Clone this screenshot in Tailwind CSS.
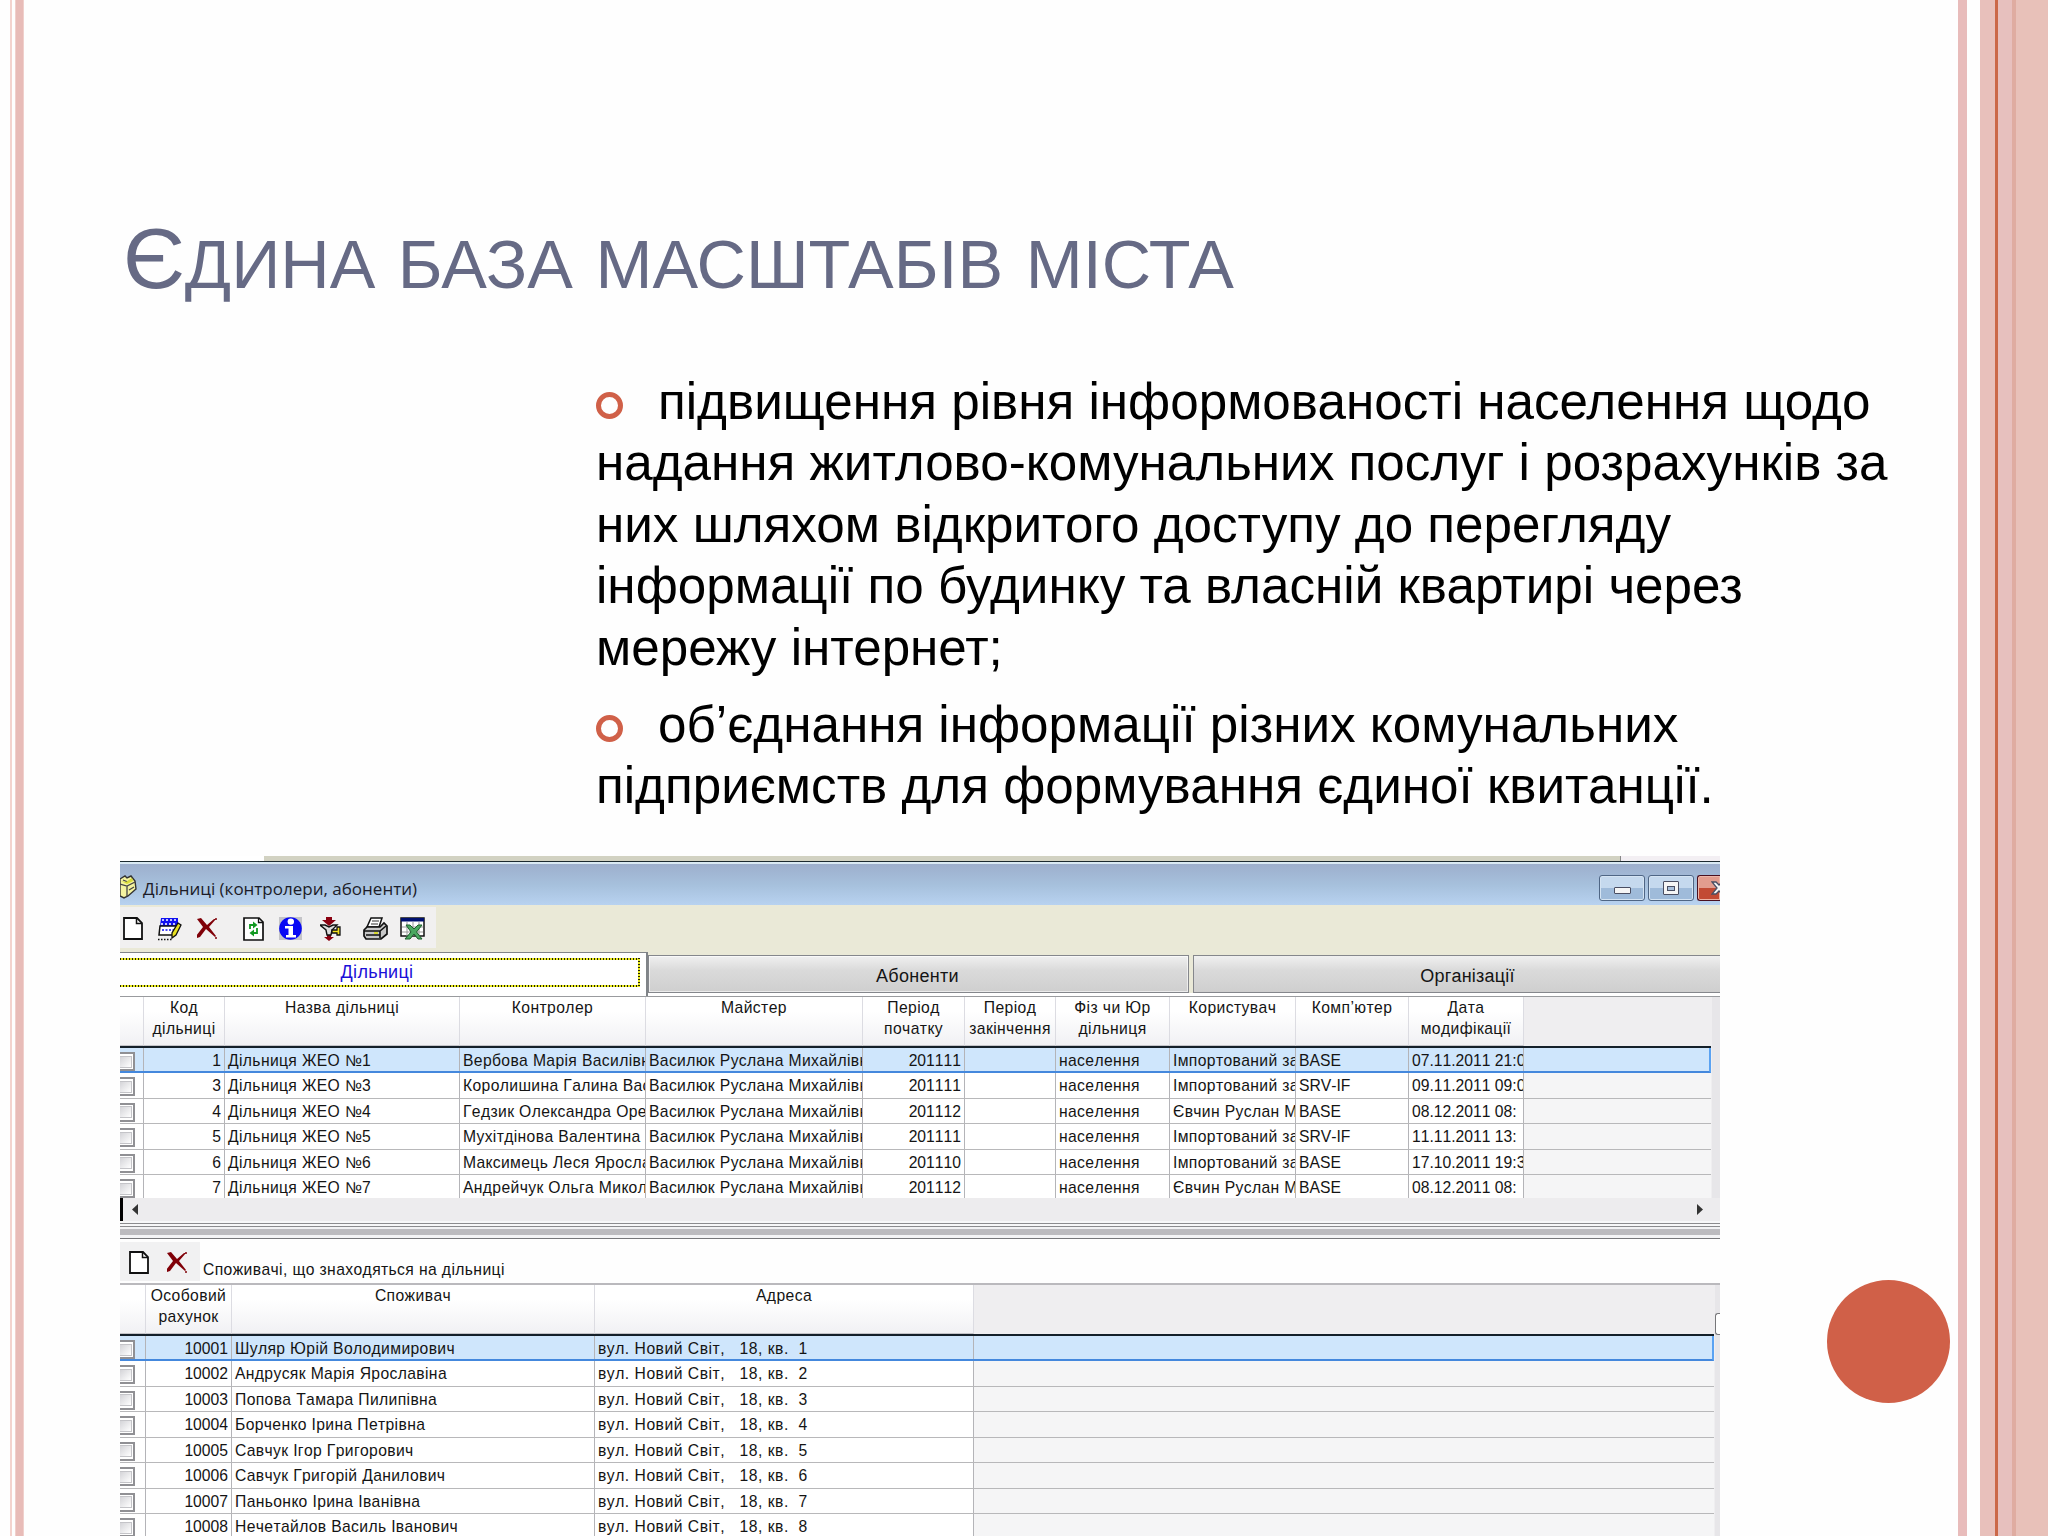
<!DOCTYPE html>
<html lang="uk">
<head>
<meta charset="utf-8">
<title>Єдина база масштабів міста</title>
<script src="https://cdn.jsdelivr.net/npm/@tailwindcss/browser@4"></script>
</head>
<body class="bg-[#fefefe]">
<svg class="hidden">
  <symbol id="doc" viewBox="0 0 20 23"><path d="M1 1h13l5 5v16H1z" fill="#fff" stroke="#111" stroke-width="1.8"/><path d="M13.500 1v5.500H19" fill="none" stroke="#111" stroke-width="1.500"/></symbol>
  <symbol id="del" viewBox="0 0 20 21"><path d="M0 1l4-1 6 7 7-6 2 0-7 8 7 9-1 1-9-8-6 8-3 1-1-2 7-9z" fill="#800008"/><path d="M18 1h2M18 20h2" stroke="#800008" stroke-width="1.500"/></symbol>
</svg>
<div class="relative flex h-[1536px] w-[2048px] overflow-hidden">
  <div class="flex w-[120px] shrink-0">
    <div class="ml-[10px] h-full w-[2px] bg-[#f3d3ce]"></div>
    <div class="ml-[3px] h-full w-[9px] border-x border-[#f0d0cc] bg-[#e8bcb8]"></div>
  </div>

  <main class="flex w-[1838px] shrink-0 flex-col font-['Liberation_Sans',sans-serif]">
    <h1 class="mt-[207px] h-[107px] pl-[3px] text-[86px] leading-[102px] whitespace-nowrap text-[#666a85] [word-spacing:3.5px]">Є<span class="text-[68.4px]">ДИНА БАЗА МАСШТАБІВ МІСТА</span></h1>

    <div class="mt-[57px] ml-[476px] flex h-[485px] flex-col text-[51.2px] leading-[61.4px] whitespace-nowrap text-black">
      <div class="flex items-center"><i class="mt-[7px] mr-[35px] block size-[27px] rounded-full border-[5.500px] border-[#d06048]"></i>підвищення рівня інформованості населення щодо</div>
      <div>надання житлово-комунальних послуг і розрахунків за</div>
      <div>них шляхом відкритого доступу до перегляду</div>
      <div>інформації по будинку та власній квартирі через</div>
      <div>мережу інтернет;</div>
      <div class="mt-[16px] flex items-center"><i class="mt-[7px] mr-[35px] block size-[27px] rounded-full border-[5.500px] border-[#d06048]"></i>об’єднання інформації різних комунальних</div>
      <div>підприємств для формування єдиної квитанції.</div>
    </div>

    <section class="flex h-[680px] w-[1600px] flex-col overflow-hidden bg-white text-[15.700px] text-[#141414] [font-kerning:none]">
      <div class="flex h-[5px] shrink-0"><div class="w-[144px]"></div><div class="w-[1357px] border-r border-[#888] bg-[#d2d2c2]"></div><div class="flex-1 bg-[#f3eff3]"></div></div>
      <div class="h-px shrink-0 bg-[#1c2a30]"></div>
      <div class="h-[2px] shrink-0 bg-[#d9e9f3]"></div>

      <header class="flex h-[41px] shrink-0 bg-linear-to-b from-[#9dafcd] via-[#a6c0dc] to-[#b8d2f0]">
        <svg class="mt-[11px] h-[24px] w-[17px]" viewBox="0 0 17 24"><path d="M0 4l5-3 2 2 4-2 4 5 1 8-8 7-4 2-4-2z" fill="#f4f3a0" stroke="#333" stroke-width="1.400"/><path d="M0 9l7 2 8-4M7 11v11M3 5l5 2 4-3M9 15l5-3" fill="none" stroke="#444" stroke-width="1.300"/><path d="M1 6l6 3 6-3-1-3-6 4z" fill="#d8dc38"/></svg>
        <div class="ml-[6px] pt-[13px] font-['Open_Sans',sans-serif] text-[17px] leading-[24px] whitespace-pre text-[#1c1c28]">Дільниці (контролери, абоненти)</div>
        <div class="ml-auto flex gap-[3px] pt-[11px]">
          <div class="flex h-[26px] w-[46px] items-center justify-center rounded-[3px] border-[1.500px] border-[#4f6685] bg-linear-to-b from-[#c5d9ee] from-50% to-[#9fbbda] to-50% inset-ring inset-ring-[#d5e4f3]"><i class="mt-[5px] h-[7px] w-[17px] rounded-[1px] border-[1.500px] border-[#4a4e62] bg-[#f5f5f5]"></i></div>
          <div class="flex h-[26px] w-[46px] items-center justify-center rounded-[3px] border-[1.500px] border-[#4f6685] bg-linear-to-b from-[#c5d9ee] from-50% to-[#9fbbda] to-50% inset-ring inset-ring-[#d5e4f3]"><i class="flex h-[14px] w-[16px] items-center justify-center rounded-[1px] border-[1.500px] border-[#4a4e62] bg-[#f5f5f5]"><b class="h-[5px] w-[8px] border-[1.500px] border-[#4a4e62] bg-[#a8c0dc]"></b></i></div>
          <div class="h-[26px] w-[23px] overflow-hidden rounded-l-[3px] border-[1.500px] border-r-0 border-[#4a1020] bg-linear-to-b from-[#e29c8e] from-50% to-[#c24a34] to-50% inset-ring inset-ring-[#edb5a8]"><svg class="mt-[5px] ml-[13px] h-[14px] w-[16px]" viewBox="0 0 16 14"><path d="M1 1h4l3 3 3-3h4l-5 6 5 6h-4l-3-3-3 3H1l5-6z" fill="#f5f5f5" stroke="#4a4e62" stroke-width="1.300"/></svg></div>
        </div>
      </header>

      <div class="flex h-[47px] shrink-0 items-start bg-[#eae9d7] pt-[2px]">
        <div class="flex h-[41px] w-[316px] items-start bg-[#f1f0f0] pt-[10px] pl-[3px]">
          <svg class="h-[23px] w-[20px]"><use href="#doc"/></svg>
          <svg class="ml-[15px] h-[24px] w-[24px]" viewBox="0 0 24 24"><path d="M3 1h17v8H2z" fill="#1010f0"/><path d="M4 3h2m2 0h2m2 0h2m2 0h2M3 7h2m2 0h2m2 0h2m2 0h2" stroke="#fff" stroke-width="1.300"/><path d="M2 9h17l-2 9H1z" fill="#fff" stroke="#111" stroke-width="1.500"/><path d="M4 13h12" stroke="#1010f0" stroke-width="1.500" stroke-dasharray="2 1.500"/><path d="M20 6l3 2-5 10-4 3 0-5z" fill="#e8e020" stroke="#111" stroke-width="1.300"/><path d="M0 22.500h14" stroke="#111" stroke-width="1.500" stroke-dasharray="1.500 1.500"/></svg>
          <svg class="mt-[1px] ml-[15px] h-[21px] w-[20px]"><use href="#del"/></svg>
          <svg class="ml-[26px] h-[24px] w-[21px]" viewBox="0 0 21 24"><path d="M1 1h15l4 4v18H1z" fill="#fff" stroke="#111" stroke-width="1.700"/><path d="M15.500 1v4.500H20" fill="none" stroke="#111" stroke-width="1.300"/><path d="M7 12V8h4M14 11v5H10" fill="none" stroke="#129a22" stroke-width="1.800"/><path d="M10 4.500l4.500 3.500-4.500 3.500zM11 12.500l-4.500 3.500 4.500 3.500z" fill="#129a22"/></svg>
          <svg class="ml-[15px] h-[23px] w-[23px]" viewBox="0 0 23 23"><path d="M0 0h23v23H0z" fill="#c4c4c8"/><circle cx="11.500" cy="11.500" r="11.300" fill="#0808f4"/><circle cx="11.800" cy="4.600" r="3.200" fill="#fff"/><path d="M6 9h8v9h3v2.500H7V18h2.500v-6.500H6z" fill="#fff"/></svg>
          <svg class="ml-[18px] h-[24px] w-[21px]" viewBox="0 0 21 24"><path d="M6 0h6v3h4l-7 6-7-6h4zM7 17h4v3h3l-5 4-5-4h3z" fill="#8a0010"/><path d="M0 8h5l4 2 4-2h4l-5 5-1 5H7l-1-5z" fill="#ddd" stroke="#111" stroke-width="1.400"/><path d="M12 13h5v-3h3v8h-3v-2h-5z" fill="#f0e020" stroke="#111" stroke-width="1.300"/></svg>
          <svg class="ml-[22px] h-[23px] w-[25px]" viewBox="0 0 25 23"><path d="M8 1h11l-3 9H4z" fill="#fff" stroke="#111" stroke-width="1.500"/><path d="M9 4h7M8 7h7" stroke="#333" stroke-width="1.200"/><path d="M4 10h13l4-4 3 3v8l-6 5H3l-2-3v-6z" fill="#c8c8c8" stroke="#111" stroke-width="1.700"/><path d="M1 14h16l6-5M3 18h14M17 14v7" fill="none" stroke="#111" stroke-width="1.600"/><path d="M11 16h4" stroke="#d8d820" stroke-width="1.800"/></svg>
          <svg class="ml-[12px] h-[23px] w-[25px]" viewBox="0 0 25 23"><path d="M1 1h23v18H1z" fill="#fff" stroke="#111" stroke-width="1.500"/><path d="M1 1h23v3.500H1z" fill="#001070"/><path d="M7 5v14M13 5v14M19 5v14M2 10h21M2 15h21" stroke="#999" stroke-width="1"/><path d="M6 8h4l4 4 4-4h4l-5.500 7 5.500 7h-4l-4-5-4 5H5l6-7z" fill="#4aa860" stroke="#1c5f2c"/></svg>
        </div>
      </div>

      <div class="flex h-[45px] shrink-0 items-end border-b border-[#999b9e] bg-[#eae9d7]">
        <div class="h-full w-[528px] border-t-[1.500px] border-r-2 border-[#808488] bg-white pt-[5px] pr-[6px]">
          <div class="flex h-[29px] bg-[repeating-linear-gradient(90deg,#222200_0_1px,#e8e820_1px_3px)]">
            <div class="my-[2px] flex flex-1 items-center justify-center bg-white pr-[4px] text-[18px] tracking-[0.3px] text-[#1a10d8]">Дільниці</div>
            <div class="w-[2px] bg-[repeating-linear-gradient(180deg,#222200_0_1px,#e8e820_1px_3px)]"></div>
          </div>
        </div>
        <div class="flex h-[41px] flex-1 gap-[4px] border-b-[3px] border-white">
          <div class="flex w-[541px] justify-center border-[1.500px] border-[#85878c] bg-linear-to-b from-[#f0f0f0] from-0% via-[#dadada] via-40% to-[#cfcfcf] pt-[6px] pr-[2px] text-[18px] leading-[28px] tracking-[0.3px] inset-ring inset-ring-white/60">Абоненти</div>
          <div class="flex flex-1 justify-center border-[1.500px] border-r-0 border-[#85878c] bg-linear-to-b from-[#f0f0f0] from-0% via-[#dadada] via-40% to-[#cfcfcf] pt-[6px] pl-[21px] text-[18px] leading-[28px] tracking-[0.2px]">Організації</div>
        </div>
      </div>

      <div class="flex h-[201px] shrink-0 overflow-hidden bg-[#efeef0]">
        <div id="areas" class="w-[1591px] overflow-hidden"></div>
        <div class="ml-[1px] flex-1 bg-[#e7e6e9]"></div>
      </div>
      <div class="flex h-[23px] shrink-0 items-center justify-between border-l-3 border-black bg-[#edecee] pr-[17px] pl-[9px]">
        <svg class="h-[11px] w-[6px]" viewBox="0 0 6 11"><path d="M6 0v11L0 5.500z" fill="#333"/></svg>
        <svg class="h-[11px] w-[6px]" viewBox="0 0 6 11"><path d="M0 0v11l6-5.500z" fill="#333"/></svg>
      </div>
      <div class="h-[19px] shrink-0 bg-[linear-gradient(#f7f7f8_0_2px,#8b8b8e_2px_3px,#f7f7f8_3px_5px,#8b8b8e_5px_6px,#f2f2f4_6px_8px,#bcbbbf_8px_14px,#f4f4f6_14px_17px,#77777a_17px_18px,#fff_18px)]"></div>

      <div class="flex h-[45px] shrink-0 items-start border-b-2 border-[#bab9bd] bg-[#fefefe]">
        <div class="mt-[2px] flex h-[39px] w-[80px] items-start bg-[#f1f1f2] pt-[9px] pl-[9px]">
          <svg class="h-[23px] w-[20px]"><use href="#doc"/></svg>
          <svg class="mt-[1px] ml-[18px] h-[21px] w-[20px]"><use href="#del"/></svg>
        </div>
        <div class="pt-[18px] pl-[3px] leading-[24px] tracking-[0.38px] whitespace-pre">Споживачі, що знаходяться на дільниці</div>
      </div>
      <div class="flex h-[252px] shrink-0 overflow-hidden bg-[#efeef0]">
        <div id="people" class="w-[1594px] overflow-hidden"></div>
        <div class="ml-[1px] flex-1 bg-[#e7e6e9] pt-[28px]"><div class="h-[22px] rounded-l-[3px] border-[1.500px] border-r-0 border-[#77777a] bg-white"></div></div>
      </div>
    </section>
  </main>

  <div class="flex flex-1">
    <div class="h-full w-[9px] bg-[#e8bcbb]"></div>
    <div class="h-full w-[13px]"></div>
    <div class="h-full w-[15px] bg-[#e8c0bb]"></div>
    <div class="h-full w-[3px] bg-[#cb6848]"></div>
    <div class="h-full w-[14px] bg-[#e7c0be]"></div>
    <div class="h-full w-[4px] bg-[#dfaca1]"></div>
    <div class="h-full flex-1 bg-[#e8c1b9]"></div>
  </div>
  <div class="absolute top-[1280px] left-[1827px] size-[123px] rounded-full bg-[#d06048]"></div>
</div>

<script>
  function build(id, grid, heads, rows, right) {
    const host = document.getElementById(id);
    let h = '<div class="' + grid + ' h-[51px] border-b-2 border-[#14202a] bg-[#efeef0] text-center leading-[21.300px] tracking-[0.4px]">';
    heads.forEach(t => { h += '<div class="overflow-hidden border-r border-b border-r-[#dcdce2] border-b-[#c4c4c8] bg-linear-to-b from-white from-30% to-[#f1f1f4] whitespace-pre">' + t + '</div>'; });
    h += '<div></div></div>';
    rows.forEach((r, n) => {
      const sel = n === 0;
      h += '<div class="' + grid + (sel ? ' border-r-2 border-b-2 border-b-[#4488dd] border-r-[#5aa2f2] bg-[#cfe6fc]' : ' border-b-[1.500px] border-b-[#b8b8ba]') + ' h-[25.450px] leading-[25px]">';
      h += '<div class="border-r border-[#b4b4b8] pt-[4px] ' + (sel ? '' : 'bg-white') + '"><div class="h-[19px] w-[15px] border-2 border-l-0 border-[#909094] bg-white py-[1.500px] pr-[1.500px]"><div class="h-full border border-l-0 border-[#c4c4c8] bg-linear-to-br from-[#d4d4d8] to-white"></div></div></div>';
      r.forEach((t, i) => {
        const track = t.startsWith('вул') ? 'tracking-[0.5px] ' : /[а-я]/.test(t) ? 'tracking-[0.36px] ' : '';
        h += '<div class="overflow-hidden border-r border-[#b4b4b8] whitespace-pre ' + track + (sel ? '' : 'bg-white ') + (right.includes(i) ? 'pr-[3px] text-right' : 'pl-[3px] text-left') + '">' + t + '</div>';
      });
      h += '<div class="' + (sel ? '' : 'bg-[#f5f5f6]') + '"></div></div>';
    });
    host.innerHTML = h;
  }
  const M = 'Василюк Руслана Михайлівн', I = 'Імпортований за', E = 'Євчин Руслан М', N = 'населення';
  build('areas', 'grid grid-cols-[24px_81px_235px_186px_217px_102px_91px_114px_126px_113px_115px_1fr]',
    ['', 'Код\nдільниці', 'Назва дільниці', 'Контролер', 'Майстер', 'Період\nпочатку', 'Період\nзакінчення', 'Фіз чи Юр\nдільниця', 'Користувач', 'Комп’ютер', 'Дата\nмодифікації'],
    [
      ['1', 'Дільниця ЖЕО №1', 'Вербова Марія Василівн', M, '201111', '', N, I, 'BASE', '07.11.2011 21:0'],
      ['3', 'Дільниця ЖЕО №3', 'Королишина Галина Вас', M, '201111', '', N, I, 'SRV-IF', '09.11.2011 09:0'],
      ['4', 'Дільниця ЖЕО №4', 'Гедзик Олександра Оре', M, '201112', '', N, E, 'BASE', '08.12.2011 08:'],
      ['5', 'Дільниця ЖЕО №5', 'Мухітдінова Валентина', M, '201111', '', N, I, 'SRV-IF', '11.11.2011 13:'],
      ['6', 'Дільниця ЖЕО №6', 'Максимець Леся Яросла', M, '201110', '', N, I, 'BASE', '17.10.2011 19:3'],
      ['7', 'Дільниця ЖЕО №7', 'Андрейчук Ольга Микол', M, '201112', '', N, E, 'BASE', '08.12.2011 08:']
    ], [0, 4]);
  const A = 'вул. Новий Світ,   18, кв.  ';
  build('people', 'grid grid-cols-[26px_86px_363px_379px_1fr]',
    ['', 'Особовий\nрахунок', 'Споживач', 'Адреса'],
    ['Шуляр Юрій Володимирович', 'Андрусяк Марія Ярославіна', 'Попова Тамара Пилипівна', 'Борченко Ірина Петрівна', 'Савчук Ігор Григорович', 'Савчук Григорій Данилович', 'Паньонко Ірина Іванівна', 'Нечетайлов Василь Іванович']
      .map((n, i) => [String(10001 + i), n, A + (i + 1)]), [0]);
</script>
</body>
</html>
